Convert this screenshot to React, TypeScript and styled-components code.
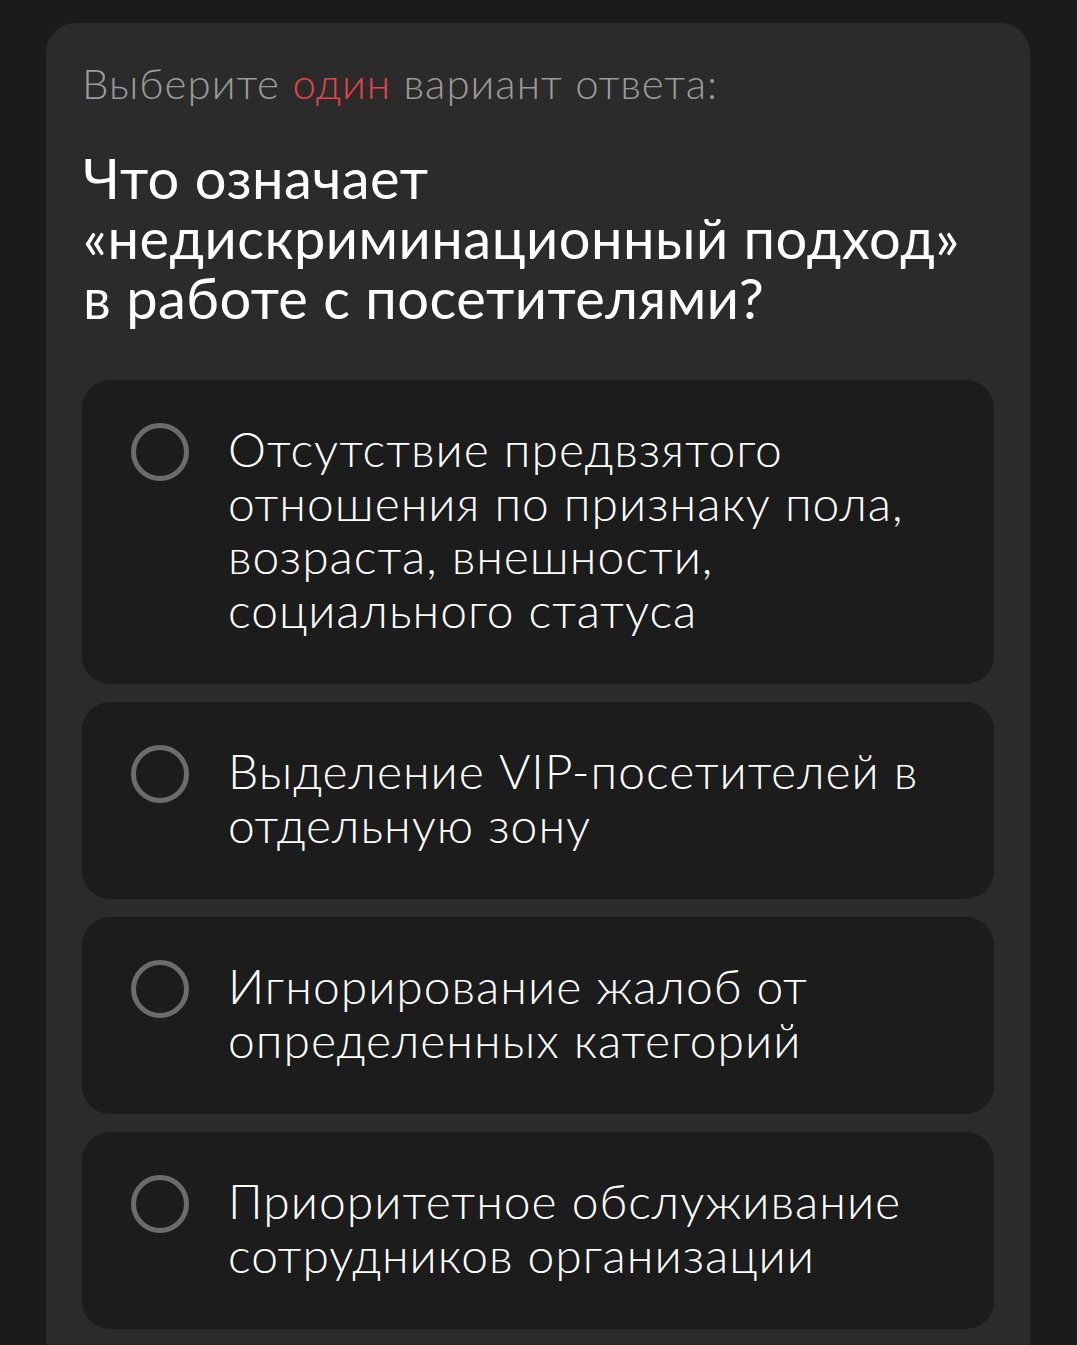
import React from 'react';
import styled, { createGlobalStyle } from 'styled-components';

const GlobalStyle = createGlobalStyle`
  html, body {
    margin: 0;
    padding: 0;
    background: #1b1b1b;
    font-family: 'Lato', 'Noto Sans', sans-serif;
  }
`;

export const Page = styled.div`
  height: 1345px;
  overflow: hidden;
  padding: 23px 47px 0 46px;
  box-sizing: border-box;
`;

export const Card = styled.div`
  background: #2b2b2b;
  border-radius: 30px;
  padding: 36px 36px 40px 36px;
  min-height: 1400px;
  box-sizing: border-box;
`;

export const Hint = styled.div`
  font-size: 42px;
  font-weight: 300;
  letter-spacing: 1px;
  color: #9b9b9b;
  line-height: 48px;
  white-space: nowrap;
  span {
    color: #e2434c;
  }
`;

export const Question = styled.h1`
  margin: 41px 0 52px 1px;
  font-size: 56px;
  font-weight: 400;
  letter-spacing: 0.5px;
  line-height: 60px;
  color: #ffffff;
  white-space: nowrap;
`;

export const Options = styled.div`
  display: flex;
  flex-direction: column;
  gap: 18px;
`;

export const Option = styled.div`
  display: flex;
  align-items: flex-start;
  gap: 39px;
  background: #1c1c1c;
  border-radius: 28px;
  padding: 42px 30px 48px 49px;
`;

export const Radio = styled.div`
  flex: none;
  width: 58px;
  height: 58px;
  margin-top: 1px;
  border-radius: 50%;
  border: 5px solid #6c6c6c;
  box-sizing: border-box;
`;

export const Label = styled.div`
  font-size: 48px;
  font-weight: 300;
  letter-spacing: 1px;
  line-height: 53.5px;
  color: #ffffff;
  white-space: nowrap;
`;

const answers: string[][] = [
  ['Отсутствие предвзятого', 'отношения по признаку пола,', 'возраста, внешности,', 'социального статуса'],
  ['Выделение VIP-посетителей в', 'отдельную зону'],
  ['Игнорирование жалоб от', 'определенных категорий'],
  ['Приоритетное обслуживание', 'сотрудников организации'],
];

const Lines = ({ lines }: { lines: string[] }) => (
  <>
    {lines.map((l, i) => (
      <div key={i}>{l}</div>
    ))}
  </>
);

export default function App() {
  return (
    <>
      <GlobalStyle />
      <Page>
        <Card>
          <Hint>
            Выберите <span>один</span> вариант ответа:
          </Hint>
          <Question>
            <Lines lines={['Что означает', '«недискриминационный подход»', 'в работе с посетителями?']} />
          </Question>
          <Options>
            {answers.map((a, i) => (
              <Option key={i}>
                <Radio />
                <Label>
                  <Lines lines={a} />
                </Label>
              </Option>
            ))}
          </Options>
        </Card>
      </Page>
    </>
  );
}
